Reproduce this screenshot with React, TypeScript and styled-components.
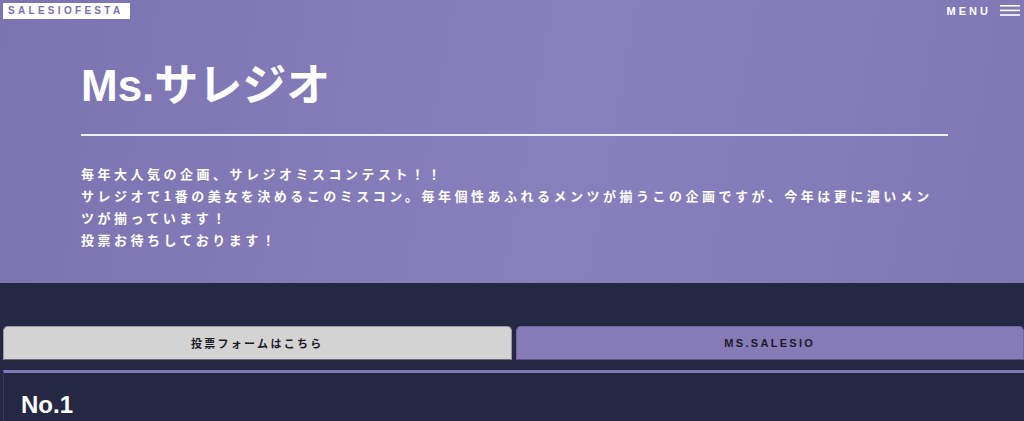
import { createGlobalStyle, styled } from "styled-components";

const GlobalStyle = createGlobalStyle`
  html, body {
    margin: 0;
    padding: 0;
    background: #242842;
  }
  body {
    font-family: "Liberation Sans", "Noto Sans CJK JP", sans-serif;
    overflow: hidden;
  }
`;

const tabs = [
  { label: "投票フォームはこちら", active: false },
  { label: "MS.SALESIO", active: true },
];

const App = () => {
  return (
    <>
      <GlobalStyle />
      <Hero>
        <TopBar>
          <Logo>SALESIOFESTA</Logo>
          <MenuButton>
            MENU
            <svg width="20" height="12" viewBox="0 0 20 12">
              <rect x="0" y="0" width="20" height="1.6" fill="#fff" />
              <rect x="0" y="4.6" width="20" height="1.6" fill="#fff" />
              <rect x="0" y="9.2" width="20" height="1.6" fill="#fff" />
            </svg>
          </MenuButton>
        </TopBar>
        <HeroInner>
          <Title>Ms.サレジオ</Title>
          <Rule />
          <Lead>
            毎年大人気の企画、サレジオミスコンテスト！！
            <br />
            サレジオで1番の美女を決めるこのミスコン。毎年個性あふれるメンツが揃うこの企画ですが、今年は更に濃いメンツが揃っています！
            <br />
            投票お待ちしております！
          </Lead>
        </HeroInner>
      </Hero>
      <Main>
        <TabRow>
          {tabs.map((t) => (
            <Tab key={t.label} $active={t.active}>
              {t.label}
            </Tab>
          ))}
        </TabRow>
        <Panel>
          <RankTitle>No.1</RankTitle>
        </Panel>
      </Main>
    </>
  );
};

export default App;

const Hero = styled.header`
  background: linear-gradient(100deg, #7c74b0 0%, #8880bc 55%, #8078b4 100%);
  padding-bottom: 32px;
`;

const TopBar = styled.div`
  display: flex;
  justify-content: space-between;
  align-items: center;
  height: 22px;
  padding: 0 4px 0 3px;
`;

const Logo = styled.div`
  background: #fff;
  color: #7a70ae;
  font-size: 10px;
  font-weight: 700;
  letter-spacing: 3.3px;
  height: 16px;
  line-height: 16px;
  width: 127px;
  box-sizing: border-box;
  padding-left: 5px;
`;

const MenuButton = styled.div`
  display: flex;
  align-items: center;
  column-gap: 9px;
  color: #fff;
  font-size: 11px;
  font-weight: 700;
  letter-spacing: 3px;
`;

const HeroInner = styled.div`
  padding: 0 76px 0 81px;
`;

const Title = styled.h1`
  margin: 42px 0 0;
  color: #fff;
  font-size: 44px;
  font-weight: 700;
  line-height: 1;
`;

const Rule = styled.hr`
  margin: 26px 0 0;
  border: none;
  height: 2px;
  background: #f1eff8;
`;

const Lead = styled.p`
  margin: 27px 0 0;
  color: #fff;
  font-family: "Noto Sans CJK JP", sans-serif;
  font-size: 13px;
  font-weight: 700;
  line-height: 22px;
  letter-spacing: 3.5px;
`;

const Main = styled.main`
  padding: 43px 0 0 3px;
`;

const TabRow = styled.div`
  display: flex;
  column-gap: 4px;
`;

const Tab = styled.div<{ $active: boolean }>`
  flex: 1;
  height: 34px;
  box-sizing: border-box;
  display: flex;
  align-items: center;
  justify-content: center;
  border-radius: 5px 5px 0 0;
  border: 1px solid ${(p) => (p.$active ? "#6f66a2" : "#9a9aa2")};
  border-bottom-color: ${(p) => (p.$active ? "#5a5288" : "#6a6a74")};
  background: ${(p) => (p.$active ? "#857bb7" : "#d3d3d3")};
  color: #1c1c28;
  font-family: "Liberation Sans", "Noto Sans CJK JP", sans-serif;
  font-size: 11px;
  font-weight: 700;
  letter-spacing: 2.3px;
`;

const Panel = styled.section`
  margin-top: 10px;
  border-top: 3px solid #8077b5;
  border-left: 1px solid #363a58;
  padding: 20px 0 40px 17px;
`;

const RankTitle = styled.h2`
  margin: 0;
  color: #fff;
  font-size: 24px;
  font-weight: 700;
  line-height: 1;
`;
